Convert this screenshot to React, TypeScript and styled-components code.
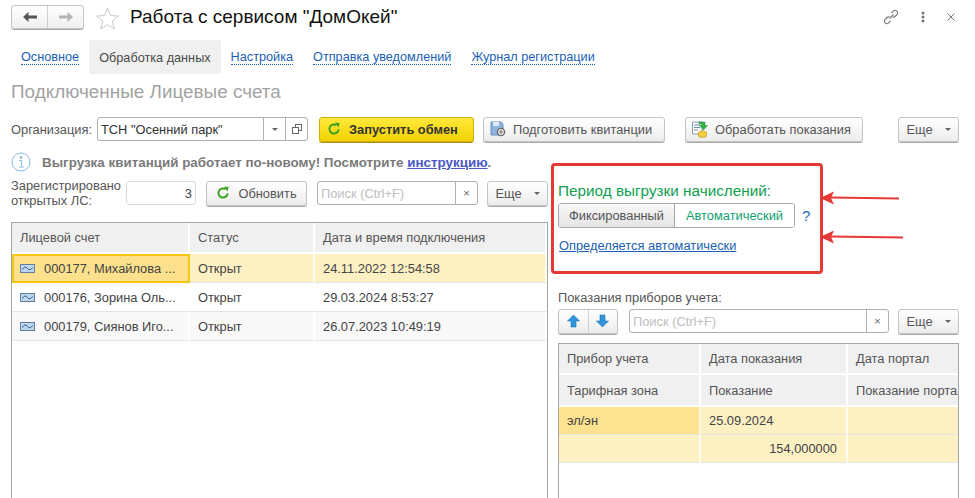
import React from 'react'
import styled, { createGlobalStyle } from 'styled-components'

const Global = createGlobalStyle`
html,body{margin:0;padding:0;background:#fff;}
body{font-family:"Liberation Sans",Arial,sans-serif;font-size:12.85px;color:#444;overflow:hidden;}
`

const Refresh = () => (
  <svg width="14" height="14" viewBox="0 0 14 14">
    <path d="M11.6 7.2A4.6 4.6 0 1 1 9.6 3.2" fill="none" stroke="#3ea31f" strokeWidth="2" />
    <path d="M8 0.6 L12.6 1 L11.6 5.6 Z" fill="#3ea31f" />
  </svg>
)

const RowIcon = () => (
  <svg width="15" height="9" viewBox="0 0 15 9">
    <rect x="0.5" y="0.5" width="14" height="8" fill="#bcd6ee" stroke="#5f7f9c" />
    <path d="M2.5 5.5 C4 2.5 6 2.5 7.5 4.5 S11 6 12.5 3.5" fill="none" stroke="#1f4f86" />
  </svg>
)

const Caret = styled.span`
  display:inline-block;
  width:0;
  height:0;
  border-left:3px solid transparent;
  border-right:3px solid transparent;
  border-top:3px solid #666;
`
const MoreCaret = styled(Caret)`
  margin-left:4px;
`

const Header = styled.div`
  height:40px;
  box-sizing:border-box;
  padding:5px 20px 0 11px;
  display:flex;
  align-items:flex-start;
`
const NavGroup = styled.div`
  display:flex;
  width:73px;
  height:24px;
  box-sizing:border-box;
  border:1px solid #c4c4c4;
  border-radius:3px;
  box-shadow:0 1px 0 #a9a9a9;
  background:linear-gradient(#fff,#efefef);
`
const NavButton = styled.div<{ $divider?: boolean }>`
  flex:1;
  display:flex;
  align-items:center;
  justify-content:center;
  ${({ $divider }) => $divider && 'border-left:1px solid #d0d0d0;'}
`
const StarIcon = styled.svg`
  margin:2px 0 0 12px;
`
const Title = styled.div`
  margin-left:11px;
  font-size:19px;
  line-height:24px;
  color:#111;
`
const HeaderTools = styled.div`
  margin-left:auto;
  display:flex;
  align-items:center;
  gap:22px;
  height:24px;
  color:#777;
`
const Tabs = styled.div`
  display:flex;
  height:34px;
  padding-left:11px;
  font-size:12.7px;
`
const Tab = styled.div<{ $active?: boolean }>`
  display:flex;
  align-items:center;
  padding:2px 10px 0;
  border-radius:2px;
  background:${({ $active }) => ($active ? '#f0f0f0' : 'transparent')};
  color:${({ $active }) => ($active ? '#4a4a4a' : '#1a5fb4')};
  span{
    ${({ $active }) => ($active ? '' : 'border-bottom:1px dotted #1a5fb4;line-height:13px;')}
  }
`
const GroupTitle = styled.div`
  padding:7px 0 0 11px;
  height:42px;
  box-sizing:border-box;
  font-size:18.9px;
  line-height:22px;
  color:#a3a3a3;
`
const OrgRow = styled.div`
  display:flex;
  align-items:center;
  height:26px;
  padding-left:11px;
`
const FieldLabel = styled.div`
  width:86px;
  color:#555;
`
const FieldBox = styled.div<{ $w: number }>`
  width:${({ $w }) => $w}px;
  height:24px;
  box-sizing:border-box;
  display:flex;
  align-items:stretch;
  border:1px solid #b0b0b0;
  border-radius:3px;
  background:#fff;
`
const FieldText = styled.div<{ $placeholder?: boolean }>`
  flex:1;
  display:flex;
  align-items:center;
  padding-left:3px;
  color:${({ $placeholder }) => ($placeholder ? '#bdbdbd' : '#333')};
  overflow:hidden;
  white-space:nowrap;
`
const FieldCell = styled.div<{ $w?: number }>`
  width:${({ $w }) => $w ?? 21}px;
  display:flex;
  align-items:center;
  justify-content:center;
  border-left:1px solid #b0b0b0;
  color:#666;
  font-size:11px;
`
const Button = styled.div<{ $w: number; $ml?: number; $primary?: boolean; $iconStart?: number; $gap?: number }>`
  width:${({ $w }) => $w}px;
  margin-left:${({ $ml }) => $ml ?? 0}px;
  height:25px;
  box-sizing:border-box;
  display:flex;
  align-items:center;
  justify-content:${({ $iconStart }) => ($iconStart ? 'flex-start' : 'center')};
  padding-left:${({ $iconStart }) => $iconStart ?? 0}px;
  gap:${({ $gap }) => $gap ?? 8}px;
  border:1px solid ${({ $primary }) => ($primary ? '#cfae00' : '#c4c4c4')};
  border-radius:3px;
  box-shadow:0 1px 0 ${({ $primary }) => ($primary ? '#a89000' : '#a9a9a9')};
  background:${({ $primary }) => ($primary ? 'linear-gradient(#ffe93b,#f3d200)' : 'linear-gradient(#fff,#ececec)')};
  color:${({ $primary }) => ($primary ? '#333' : '#555')};
  font-weight:${({ $primary }) => ($primary ? 700 : 400)};
  white-space:nowrap;
`
const Columns = styled.div`
  display:grid;
  grid-template-columns:537px 408px;
  gap:3px;
  padding:10px 0 0 11px;
`
const LeftColumn = styled.div`
  display:flex;
  flex-direction:column;
`
const Info = styled.div`
  height:20px;
  display:flex;
  align-items:center;
  white-space:nowrap;
  font-size:13.4px;
  font-weight:700;
  color:#7a7a7a;
  a{color:#4a56c6;text-decoration:underline;}
`
const InfoIcon = styled.svg`
  margin-right:11px;
`
const Toolbar = styled.div`
  display:flex;
  align-items:center;
  height:26px;
  margin-top:8px;
`
const TwoLineLabel = styled.div`
  width:115px;
  line-height:15px;
  color:#555;
`
const CountBox = styled.div`
  width:70px;
  height:24px;
  box-sizing:border-box;
  border:1px solid #dcdcdc;
  border-radius:3px;
  display:flex;
  align-items:center;
  justify-content:flex-end;
  padding-right:3px;
  margin-right:10px;
`
const Gap = styled.div<{ $w: number }>`
  width:${({ $w }) => $w}px;
  flex:none;
`
const Table = styled.div<{ $columns: string; $height: number; $mt: number }>`
  margin-top:${({ $mt }) => $mt}px;
  height:${({ $height }) => $height}px;
  box-sizing:border-box;
  border:1px solid #a6a6a6;
  border-bottom:none;
  display:grid;
  grid-template-columns:${({ $columns }) => $columns};
  grid-auto-rows:min-content;
  overflow:hidden;
`
const Cell = styled.div<{ $head?: boolean; $h?: number; $bg?: string; $right?: boolean; $current?: boolean }>`
  height:${({ $h }) => $h ?? 29}px;
  box-sizing:border-box;
  display:flex;
  align-items:center;
  justify-content:${({ $right }) => ($right ? 'flex-end' : 'flex-start')};
  gap:9px;
  padding:0 9px 0 8px;
  background:${({ $bg, $head }) => $bg ?? ($head ? '#f0f0f0' : '#fff')};
  border-right:2px solid ${({ $head }) => ($head ? '#fff' : 'rgba(255,255,255,.7)')};
  border-bottom:${({ $head }) => ($head ? '2px solid #fff' : '1px solid #e4e4e4')};
  color:${({ $head }) => ($head ? '#555' : '#444')};
  white-space:nowrap;
  overflow:hidden;
  ${({ $current }) => $current && 'outline:2px solid #f5c518;outline-offset:-2px;border-right:none;'}
`
const RightColumn = styled.div`
  padding-top:11px;
`
const Annotation = styled.div`
  position:relative;
  width:272px;
  height:111px;
  box-sizing:border-box;
  border:3px solid #e53935;
  border-radius:4px;
  padding:15px 0 0 4px;
`
const PeriodTitle = styled.div`
  font-size:15.3px;
  line-height:19px;
  color:#0e9f4f;
  white-space:nowrap;
`
const PeriodRow = styled.div`
  display:flex;
  align-items:center;
  margin-top:3px;
`
const Segmented = styled.div`
  display:flex;
  width:237px;
  height:25px;
  box-sizing:border-box;
  border:1px solid #a9a9a9;
  border-radius:3px;
  overflow:hidden;
`
const Segment = styled.div<{ $selected?: boolean; $w: number }>`
  width:${({ $w }) => $w}px;
  display:flex;
  align-items:center;
  justify-content:center;
  box-sizing:border-box;
  background:${({ $selected }) => ($selected ? '#fff' : 'linear-gradient(#f8f8f8,#e4e4e4)')};
  color:${({ $selected }) => ($selected ? '#0e9f70' : '#555')};
  ${({ $selected }) => $selected && 'border-left:1px solid #a9a9a9;'}
`
const Help = styled.div`
  margin-left:7px;
  color:#1a6fc4;
  font-size:15px;
`
const PeriodLink = styled.a`
  display:inline-block;
  margin:10px 0 0 1px;
  color:#1a5fb4;
  text-decoration:underline;
`
const ArrowMark = styled.svg<{ $top: number }>`
  position:absolute;
  left:100%;
  top:${({ $top }) => $top}px;
`
const MeterSection = styled.div`
  padding-left:7px;
`
const MeterLabel = styled.div`
  margin-top:16px;
  height:15px;
  line-height:15px;
  color:#555;
`
const MeterToolbar = styled.div`
  display:flex;
  align-items:center;
  height:26px;
  margin-top:3px;
`
const ArrowGroup = styled.div`
  display:flex;
  width:60px;
  height:25px;
  box-sizing:border-box;
  border:1px solid #c4c4c4;
  border-radius:3px;
  box-shadow:0 1px 0 #a9a9a9;
  background:linear-gradient(#fff,#ececec);
`

const BlockArrow = ({ down }: { down?: boolean }) => (
  <svg width="13" height="14" viewBox="0 0 13 14" style={down ? { transform: 'scaleY(-1)' } : undefined}>
    <path d="M6.5 1 L12.5 7 H9 V13 H4 V7 H0.5 Z" fill="#2f94dc" stroke="#1c77bb" strokeWidth="0.6" />
  </svg>
)

const NavArrow = ({ color, flip }: { color: string; flip?: boolean }) => (
  <svg width="14" height="10" viewBox="0 0 14 10" style={flip ? { transform: 'scaleX(-1)' } : undefined}>
    <path d="M0 5 L5.5 0 V3.5 H14 V6.5 H5.5 V10 Z" fill={color} />
  </svg>
)

const More = ({ w, ml }: { w: number; ml?: number }) => (
  <Button $w={w} $ml={ml}>
    Еще <MoreCaret />
  </Button>
)

export default function App() {
  return (
    <>
      <Global />
      <Header>
        <NavGroup>
          <NavButton><NavArrow color="#555" /></NavButton>
          <NavButton $divider><NavArrow color="#b5b5b5" flip /></NavButton>
        </NavGroup>
        <StarIcon width="23" height="23" viewBox="0 0 23 23">
          <path d="M11.5 1 L14.4 8.6 L22.4 9 L16.2 14.1 L18.3 22 L11.5 17.6 L4.7 22 L6.8 14.1 L0.6 9 L8.6 8.6 Z" fill="#fff" stroke="#c8c8c8" />
        </StarIcon>
        <Title>Работа с сервисом "ДомОкей"</Title>
        <HeaderTools>
          <svg width="16" height="16" viewBox="0 0 16 16" fill="none" stroke="#777" strokeWidth="1.1">
            <path d="M6.5 9.5 L10.5 5.5" />
            <path d="M8.5 4 L10.6 1.9 a2.5 2.5 0 0 1 3.5 3.5 L12 7.5 a2.5 2.5 0 0 1 -2.5 .5" />
            <path d="M7.5 12 L5.4 14.1 a2.5 2.5 0 0 1 -3.5 -3.5 L4 8.5 a2.5 2.5 0 0 1 2.5 -.5" />
          </svg>
          <svg width="4" height="12" viewBox="0 0 4 12" fill="#777">
            <circle cx="2" cy="2" r="1.5" /><circle cx="2" cy="6" r="1.5" /><circle cx="2" cy="10" r="1.5" />
          </svg>
          <svg width="8" height="8" viewBox="0 0 8 8" stroke="#777" strokeWidth="1">
            <path d="M0.5 0.5 L7.5 7.5 M7.5 0.5 L0.5 7.5" />
          </svg>
        </HeaderTools>
      </Header>

      <Tabs>
        <Tab><span>Основное</span></Tab>
        <Tab $active><span>Обработка данных</span></Tab>
        <Tab><span>Настройка</span></Tab>
        <Tab><span>Отправка уведомлений</span></Tab>
        <Tab><span>Журнал регистрации</span></Tab>
      </Tabs>

      <GroupTitle>Подключенные Лицевые счета</GroupTitle>

      <OrgRow>
        <FieldLabel>Организация:</FieldLabel>
        <FieldBox $w={211}>
          <FieldText>ТСН "Осенний парк"</FieldText>
          <FieldCell><Caret /></FieldCell>
          <FieldCell>
            <svg width="10" height="10" viewBox="0 0 10 10" fill="#fff" stroke="#666">
              <rect x="3.5" y="0.5" width="6" height="6" /><rect x="0.5" y="3.5" width="6" height="6" />
            </svg>
          </FieldCell>
        </FieldBox>
        <Button $w={155} $ml={11} $primary $iconStart={7}><Refresh />Запустить обмен</Button>
        <Button $w={182} $ml={9} $iconStart={6} $gap={7}>
          <svg width="16" height="16" viewBox="0 0 16 16">
            <path d="M1 1 H11 L13 3 V14 H1 Z" fill="#8fb3df" stroke="#6b8fbd" />
            <path d="M3 1 H9 V5 H3 Z" fill="#dfe9f5" />
            <circle cx="11" cy="11" r="3.6" fill="#eee" stroke="#666" strokeWidth="1.4" />
            <circle cx="11" cy="11" r="1.2" fill="#fff" stroke="#666" />
          </svg>
          Подготовить квитанции
        </Button>
        <Button $w={178} $ml={20} $iconStart={6} $gap={7}>
          <svg width="16" height="17" viewBox="0 0 16 17">
            <path d="M0.5 1 H10 V13 H0.5 Z" fill="#fff" stroke="#8aa0b5" />
            <path d="M2 4 H8 M2 6.5 H8 M2 9 H6" stroke="#6f8fb0" />
            <path d="M7 1 H13 V4.5 H15.5 L11.5 9 L7.5 4.5 H10 V3 H7 Z" fill="#38b349" stroke="#1f8f33" strokeWidth="0.5" />
            <ellipse cx="10.5" cy="11.5" rx="4" ry="1.6" fill="#f2cf3c" stroke="#b58f12" strokeWidth="0.6" />
            <path d="M6.5 11.5 V15 C6.5 16.8 14.5 16.8 14.5 15 V11.5" fill="#f2cf3c" stroke="#b58f12" strokeWidth="0.6" />
          </svg>
          Обработать показания
        </Button>
        <More w={61} ml={35} />
      </OrgRow>

      <Columns>
        <LeftColumn>
          <Info>
            <InfoIcon width="20" height="20" viewBox="0 0 20 20" fill="none" stroke="#8ab8e6">
              <circle cx="10" cy="10" r="9" />
              <circle cx="10" cy="5.5" r="1" fill="#8ab8e6" />
              <path d="M8 8.5 H10.5 V14.5 M8 15 H13" />
            </InfoIcon>
            Выгрузка квитанций работает по-новому! Посмотрите&nbsp;<a>инструкцию</a>.
          </Info>
          <Toolbar>
            <TwoLineLabel>Зарегистрировано<br />открытых ЛС:</TwoLineLabel>
            <CountBox>3</CountBox>
            <Button $w={101}><Refresh />Обновить</Button>
            <Gap $w={10} />
            <FieldBox $w={161}>
              <FieldText $placeholder>Поиск (Ctrl+F)</FieldText>
              <FieldCell>×</FieldCell>
            </FieldBox>
            <More w={61} ml={9} />
          </Toolbar>
          <Table $columns="178px 125px 1fr" $height={278} $mt={16}>
            <Cell $head $h={31}>Лицевой счет</Cell>
            <Cell $head $h={31}>Статус</Cell>
            <Cell $head $h={31}>Дата и время подключения</Cell>

            <Cell $bg="#fde08c" $current><RowIcon />000177, Михайлова ...</Cell>
            <Cell $bg="#fdf1c4">Открыт</Cell>
            <Cell $bg="#fdf1c4">24.11.2022 12:54:58</Cell>

            <Cell><RowIcon />000176, Зорина Оль...</Cell>
            <Cell>Открыт</Cell>
            <Cell>29.03.2024 8:53:27</Cell>

            <Cell $bg="#f8f8f8"><RowIcon />000179, Сиянов Иго...</Cell>
            <Cell $bg="#f8f8f8">Открыт</Cell>
            <Cell $bg="#f8f8f8">26.07.2023 10:49:19</Cell>
          </Table>
        </LeftColumn>

        <RightColumn>
          <Annotation>
            <PeriodTitle>Период выгрузки начислений:</PeriodTitle>
            <PeriodRow>
              <Segmented>
                <Segment $w={116}>Фиксированный</Segment>
                <Segment $w={121} $selected>Автоматический</Segment>
              </Segmented>
              <Help>?</Help>
            </PeriodRow>
            <PeriodLink>Определяется автоматически</PeriodLink>
            <ArrowMark $top={25} width="80" height="14" viewBox="0 0 80 14">
              <path d="M79 7.5 L10 6.5" stroke="#e53935" strokeWidth="1.8" />
              <path d="M0 7 L14 0.5 L11 7 L14 13.5 Z" fill="#e53935" />
            </ArrowMark>
            <ArrowMark $top={64} width="84" height="14" viewBox="0 0 84 14">
              <path d="M83 7.5 L10 6.5" stroke="#e53935" strokeWidth="1.8" />
              <path d="M0 7 L14 0.5 L11 7 L14 13.5 Z" fill="#e53935" />
            </ArrowMark>
          </Annotation>
          <MeterSection>
            <MeterLabel>Показания приборов учета:</MeterLabel>
            <MeterToolbar>
              <ArrowGroup>
                <NavButton><BlockArrow /></NavButton>
                <NavButton $divider><BlockArrow down /></NavButton>
              </ArrowGroup>
              <Gap $w={11} />
              <FieldBox $w={260}>
                <FieldText $placeholder>Поиск (Ctrl+F)</FieldText>
                <FieldCell>×</FieldCell>
              </FieldBox>
              <More w={61} ml={9} />
            </MeterToolbar>
            <Table $columns="142px 147px 147px" $height={157} $mt={9}>
              <Cell $head $h={31}>Прибор учета</Cell>
              <Cell $head $h={31}>Дата показания</Cell>
              <Cell $head $h={31}>Дата портал</Cell>
              <Cell $head $h={32}>Тарифная зона</Cell>
              <Cell $head $h={32}>Показание</Cell>
              <Cell $head $h={32}>Показание портала</Cell>
              <Cell $bg="#fde28f" $h={28}>эл/эн</Cell>
              <Cell $bg="#fdf1c4" $h={28}>25.09.2024</Cell>
              <Cell $bg="#fdf1c4" $h={28} />
              <Cell $bg="#fdf1c4" $h={28} />
              <Cell $bg="#fdf1c4" $h={28} $right>154,000000</Cell>
              <Cell $bg="#fdf1c4" $h={28} />
            </Table>
          </MeterSection>
        </RightColumn>
      </Columns>
    </>
  )
}
